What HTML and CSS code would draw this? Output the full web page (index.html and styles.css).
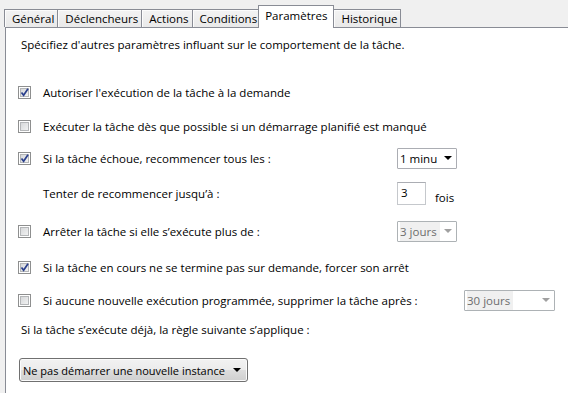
FILE: index.html
```html
<!DOCTYPE html>
<html lang="fr">
  <head>
    <meta charset="UTF-8" />
    <title>Paramètres</title>
    <link rel="stylesheet" href="styles.css">
  </head>
  <body>
    <div class="tabs">
      <div class="tab">Général</div>
      <div class="tab">Déclencheurs</div>
      <div class="tab">Actions</div>
      <div class="tab">Conditions</div>
      <div class="tab active">Paramètres</div>
      <div class="tab">Historique</div>
    </div>
    <div class="panel">
      <p class="intro">Spécifiez d'autres paramètres influant sur le comportement de la tâche.</p>

      <div class="row r1">
        <span class="check on"><svg viewBox="0 0 11 11"><path d="M2.5 5.5 L4.6 8.3 L9 1.8" /></svg></span>
        <span class="label">Autoriser l'exécution de la tâche à la demande</span>
      </div>

      <div class="row r2">
        <span class="check"></span>
        <span class="label">Exécuter la tâche dès que possible si un démarrage planifié est manqué</span>
      </div>

      <div class="row r3">
        <span class="check on"><svg viewBox="0 0 11 11"><path d="M2.5 5.5 L4.6 8.3 L9 1.8" /></svg></span>
        <span class="label">Si la tâche échoue, recommencer tous les :</span>
        <div class="combo"><span class="value">1 minu</span><span class="arrow"></span></div>
      </div>

      <div class="row r4">
        <span class="nocheck"></span>
        <span class="label">Tenter de recommencer jusqu’à :</span>
        <div class="field">3</div>
        <span class="unit">fois</span>
      </div>

      <div class="row r5">
        <span class="check"></span>
        <span class="label">Arrêter la tâche si elle s’exécute plus de :</span>
        <div class="combo off"><span class="value">3 jours</span><span class="arrow"></span></div>
      </div>

      <div class="row r6">
        <span class="check on"><svg viewBox="0 0 11 11"><path d="M2.5 5.5 L4.6 8.3 L9 1.8" /></svg></span>
        <span class="label">Si la tâche en cours ne se termine pas sur demande, forcer son arrêt</span>
      </div>

      <div class="row r7 wide">
        <span class="check"></span>
        <span class="label">Si aucune nouvelle exécution programmée, supprimer la tâche après :</span>
        <div class="combo off long"><span class="value">30 jours</span><span class="arrow"></span></div>
      </div>

      <p class="rule">Si la tâche s’exécute déjà, la règle suivante s’applique :</p>

      <div class="dropbtn">
        <span>Ne pas démarrer une nouvelle instance</span>
        <span class="arrow"></span>
      </div>
    </div>
  </body>
</html>
```

FILE: styles.css
```css
body {
  margin: 0;
  padding: 0;
  background-color: #f0f0f0;
  font-family: "Open Sans", "Noto Sans", sans-serif;
  font-size: 11.5px;
  color: #000;
  height: 393px;
  overflow: hidden;
}

/* tab strip */
.tabs {
  display: flex;
  align-items: flex-end;
  height: 27px;
  padding-left: 4px;
  position: relative;
  z-index: 1;
}
.tab {
  height: 18px;
  line-height: 17px;
  padding: 0 3px 0 7px;
  border: 1px solid #898c95;
  border-bottom: none;
  margin-right: -1px;
  background: linear-gradient(#f3f3f3, #e9e9e9);
  box-shadow: inset 1px 1px 0 #fcfcfc;
  box-sizing: border-box;
  white-space: nowrap;
}
.tab.active {
  height: 23px;
  margin: 0 -1px -1px -2px;
  padding: 0 6px;
  line-height: 20px;
  background: #fff;
  box-shadow: none;
  position: relative;
}

/* content */
.panel {
  margin-left: 5px;
  border-top: 1px solid #898c95;
  border-left: 1px solid #898c95;
  background-color: #fff;
  height: 366px;
  padding-top: 5px;
  box-sizing: border-box;
}
.intro {
  margin: 0;
  height: 24px;
  line-height: 24px;
  padding-left: 15px;
}
.row {
  display: grid;
  grid-template-columns: 25px 354px auto auto;
  justify-content: start;
  align-items: center;
  height: 24px;
  padding-left: 12px;
  white-space: nowrap;
}
.row.wide {
  grid-template-columns: 25px 421px auto;
}
.r1 { margin-top: 23px; }
.r2 { margin-top: 10px; }
.r3 { margin-top: 8px; }
.r4 { margin-top: 11px; }
.r5 { margin-top: 14px; }
.r6 { margin-top: 12px; }
.r7 { margin-top: 9px; }

.check {
  width: 13px;
  height: 13px;
  box-sizing: border-box;
  border: 1px solid #8e8f8f;
  background: linear-gradient(135deg, #cfd1d3, #f9f9f9);
  box-shadow: inset 0 0 0 1px #fff, inset 0 0 0 2px #b4b6b8;
}
.check svg {
  display: block;
  width: 11px;
  height: 11px;
}
.check svg path {
  fill: none;
  stroke: #2a3f8c;
  stroke-width: 1.7;
}

/* combos and fields */
.combo {
  width: 60px;
  height: 21px;
  box-sizing: border-box;
  border: 1px solid #abadb3;
  border-radius: 1px;
  background: #fff;
  display: flex;
  align-items: center;
  padding: 0 4px 0 2px;
}
.combo .value {
  flex: 1;
  white-space: nowrap;
  height: 19px;
  line-height: 19px;
}
.arrow {
  width: 0;
  height: 0;
  border-left: 4px solid transparent;
  border-right: 4px solid transparent;
  border-top: 4px solid #000;
  margin-left: 3px;
}
.combo.off {
  border-color: #adb2b5;
  color: #6d6d6d;
}
.combo.off .value {
  flex: 0 0 auto;
  background: #f0f0f0;
  padding-right: 3px;
}
.combo.off .arrow {
  border-top-color: #a0a0a0;
  margin-left: auto;
}
.combo.long {
  width: 91px;
}

.field {
  width: 29px;
  height: 23px;
  box-sizing: border-box;
  border: 1px solid #c5c8cc;
  border-top-color: #abadb3;
  padding: 2px 3px;
  line-height: 15px;
}
.unit {
  margin: 8px 0 0 9px;
}

.rule {
  margin: 6px 0 0;
  height: 24px;
  line-height: 24px;
  padding-left: 15px;
}
.dropbtn {
  margin: 16px 0 0 13px;
  width: 229px;
  height: 24px;
  box-sizing: border-box;
  border: 1px solid #707070;
  border-radius: 3px;
  background: linear-gradient(#f2f2f2 0%, #ebebeb 50%, #dddddd 51%, #cfcfcf 100%);
  box-shadow: inset 0 0 0 1px #fbfbfb;
  display: flex;
  align-items: center;
  justify-content: space-between;
  padding: 0 6px 0 3px;
  font-size: 11px;
  white-space: nowrap;
}
```
